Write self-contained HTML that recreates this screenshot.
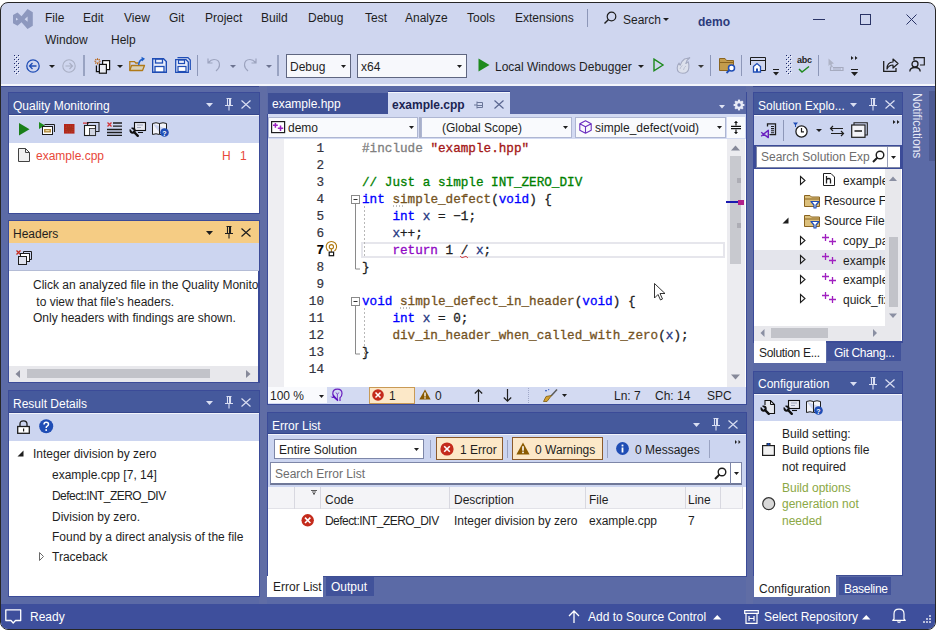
<!DOCTYPE html>
<html><head><meta charset="utf-8">
<style>
*{margin:0;padding:0;box-sizing:border-box}
html,body{width:936px;height:632px;overflow:hidden;background:#fff;font-family:"Liberation Sans",sans-serif;font-size:12px;color:#1e1e1e}
.a{position:absolute}
.t{position:absolute;white-space:nowrap;line-height:14px}
#win{position:absolute;left:0;top:2px;width:936px;height:628px;border:1px solid #262626;border-radius:8px;background:#CFD6EF;overflow:hidden}
#in{position:absolute;left:-1px;top:-3px;width:936px;height:632px}
.env{background:#5B6AA6}
.ttl{background:#45599C;color:#fff}
.ttlA{background:#F5CC84;color:#1e1e1e}
.tb{background:#CCD5F0}
.wh{background:#fff}
svg{position:absolute;overflow:visible}
.mono{font-family:"Liberation Mono",monospace}
</style></head><body>
<div id="win"><div id="in">

  <!-- MENU BAR -->
  <svg style="left:0;top:0" width="40" height="35" viewBox="0 0 40 35">
    <path d="M13 15 L17.5 12.5 L21.5 16.2 L27.5 9 L32.8 12.3 V25.7 L27.5 29 L21.5 22.2 L17.5 25.8 L13 23.2 Z M16 17.8 V20.6 L18.3 19.2Z M27.6 16.6 V21.8 L24.6 19.2 Z" fill="#8D98BE" fill-rule="evenodd"/>
  </svg>
  <div class="t" style="left:45px;top:11px">File</div>
  <div class="t" style="left:83px;top:11px">Edit</div>
  <div class="t" style="left:124px;top:11px">View</div>
  <div class="t" style="left:169px;top:11px">Git</div>
  <div class="t" style="left:205px;top:11px">Project</div>
  <div class="t" style="left:261px;top:11px">Build</div>
  <div class="t" style="left:308px;top:11px">Debug</div>
  <div class="t" style="left:365px;top:11px">Test</div>
  <div class="t" style="left:405px;top:11px">Analyze</div>
  <div class="t" style="left:467px;top:11px">Tools</div>
  <div class="t" style="left:515px;top:11px">Extensions</div>
  <div class="t" style="left:45px;top:33px">Window</div>
  <div class="t" style="left:111px;top:33px">Help</div>
  <div class="a" style="left:587px;top:9px;width:1px;height:18px;background:#8D97B8"></div>
  <svg style="left:603px;top:11px" width="14" height="14" viewBox="0 0 14 14"><circle cx="8.5" cy="5.5" r="4.3" fill="none" stroke="#1e1e1e" stroke-width="1.2"/><path d="M5.5 8.5 L1.5 12.5" stroke="#1e1e1e" stroke-width="1.4"/></svg>
  <div class="t" style="left:623px;top:13px">Search</div>
  <svg style="left:663px;top:18px" width="6" height="4"><path d="M0 0H6L3 3Z" fill="#1e1e1e"/></svg>
  <div class="t" style="left:698px;top:15px;font-weight:bold;color:#2B3A7B">demo</div>
  <div class="a" style="left:813px;top:19px;width:12px;height:1px;background:#2a3466"></div>
  <div class="a" style="left:860px;top:14px;width:11px;height:11px;border:1px solid #2a3466"></div>
  <svg style="left:906px;top:14px" width="11" height="11" viewBox="0 0 11 11"><path d="M0.5 0.5L10.5 10.5M10.5 0.5L0.5 10.5" stroke="#2a3466" stroke-width="1"/></svg>

  <!-- TOOLBAR -->
  <svg style="left:14px;top:55px" width="6" height="20" viewBox="0 0 6 20"><g fill="#F4F6FC"><rect x="1" y="1" width="1" height="1"/><rect x="5" y="1" width="1" height="1"/><rect x="3" y="3" width="1" height="1"/><rect x="1" y="5" width="1" height="1"/><rect x="5" y="5" width="1" height="1"/><rect x="3" y="7" width="1" height="1"/><rect x="1" y="9" width="1" height="1"/><rect x="5" y="9" width="1" height="1"/><rect x="3" y="11" width="1" height="1"/><rect x="1" y="13" width="1" height="1"/><rect x="5" y="13" width="1" height="1"/><rect x="3" y="15" width="1" height="1"/><rect x="1" y="17" width="1" height="1"/><rect x="5" y="17" width="1" height="1"/><rect x="3" y="19" width="1" height="1"/></g><g fill="#1E2A6A"><rect x="0" y="0" width="1" height="1"/><rect x="4" y="0" width="1" height="1"/><rect x="2" y="2" width="1" height="1"/><rect x="0" y="4" width="1" height="1"/><rect x="4" y="4" width="1" height="1"/><rect x="2" y="6" width="1" height="1"/><rect x="0" y="8" width="1" height="1"/><rect x="4" y="8" width="1" height="1"/><rect x="2" y="10" width="1" height="1"/><rect x="0" y="12" width="1" height="1"/><rect x="4" y="12" width="1" height="1"/><rect x="2" y="14" width="1" height="1"/><rect x="0" y="16" width="1" height="1"/><rect x="4" y="16" width="1" height="1"/><rect x="2" y="18" width="1" height="1"/></g></svg>
  <svg style="left:26px;top:59px" width="14" height="14" viewBox="0 0 14 14"><circle cx="7" cy="7" r="6.2" fill="none" stroke="#1F4DB5" stroke-width="1.3"/><path d="M10.5 7H3.5M6.5 4L3.5 7L6.5 10" fill="none" stroke="#1F4DB5" stroke-width="1.3"/></svg>
  <svg style="left:49px;top:65px" width="6" height="4"><path d="M0 0H6L3 3Z" fill="#1e1e1e"/></svg>
  <svg style="left:62px;top:59px" width="14" height="14" viewBox="0 0 14 14"><circle cx="7" cy="7" r="6.2" fill="none" stroke="#A9AFC4" stroke-width="1.1"/><path d="M3.5 7H10.5M7.5 4L10.5 7L7.5 10" fill="none" stroke="#A9AFC4" stroke-width="1.1"/></svg>
  <div class="a" style="left:83px;top:55px;width:2px;height:21px;background:#99A3C2"></div>
  <svg style="left:94px;top:56px" width="17" height="18" viewBox="0 0 17 18">
    <g stroke="#B8661A" stroke-width="1.1"><path d="M3.5 2.2V4M3.5 6.6V8.4M0.4 5.3H2.2M4.8 5.3H6.6M1.3 3.1L2.4 4.2M4.6 6.4L5.7 7.5M5.7 3.1L4.6 4.2M2.4 6.4L1.3 7.5"/></g>
    <rect x="8.6" y="4.6" width="7" height="9" fill="#fff" stroke="#111" stroke-width="1.2"/>
    <rect x="5.4" y="8.4" width="7" height="8.8" fill="#E9EBF2" stroke="#111" stroke-width="1.2"/>
    <path d="M2.4 9.6V15.6H5" fill="none" stroke="#111" stroke-width="1.2"/>
  </svg>
  <svg style="left:117px;top:65px" width="6" height="4"><path d="M0 0H6L3 3Z" fill="#1e1e1e"/></svg>
  <svg style="left:129px;top:56px" width="17" height="16" viewBox="0 0 17 16">
    <path d="M0.8 14.5V5.6H5.5L6.8 7H9.5" fill="none" stroke="#B07A18" stroke-width="1.3"/>
    <path d="M2.5 9.5H15.5L13.5 14.5H0.8Z" fill="#D8D0B8" stroke="#B07A18" stroke-width="1.3" stroke-linejoin="round"/>
    <path d="M9.8 9 V7.5 Q10.5 4 14 3" fill="none" stroke="#1F5FC8" stroke-width="1.4"/>
    <path d="M12.5 0.8L16 2.8L13 5.5Z" fill="#1F5FC8"/>
  </svg>
  <svg style="left:152px;top:58px" width="15" height="15" viewBox="0 0 15 15">
    <path d="M0.7 0.7H11.5L14.3 3.5V14.3H0.7Z" fill="#E8EDFA" stroke="#1F4DB5" stroke-width="1.4"/>
    <rect x="3.5" y="1" width="7" height="4" fill="none" stroke="#1F4DB5" stroke-width="1.3"/>
    <rect x="3" y="8.5" width="9" height="5.5" fill="#fff" stroke="#1F4DB5" stroke-width="1.3"/>
  </svg>
  <svg style="left:175px;top:57px" width="16" height="16" viewBox="0 0 16 16">
    <path d="M2.5 0.7H13L15.3 3V13" fill="none" stroke="#1F4DB5" stroke-width="1.2"/>
    <path d="M0.7 2.7H11L13.3 5V15.3H0.7Z" fill="#E8EDFA" stroke="#1F4DB5" stroke-width="1.3"/>
    <rect x="3.5" y="3" width="6" height="3.5" fill="none" stroke="#1F4DB5" stroke-width="1.2"/>
    <rect x="3" y="9.5" width="8" height="5" fill="#fff" stroke="#1F4DB5" stroke-width="1.2"/>
  </svg>
  <div class="a" style="left:197px;top:55px;width:1px;height:21px;background:#8D97B8"></div>
  <svg style="left:207px;top:57px" width="14" height="15" viewBox="0 0 14 15"><path d="M1 1.5V6H5.5 M1.5 5.5 Q4 2.5 7 2.5 Q12.5 2.5 12.5 8 Q12.5 11 9 14" fill="none" stroke="#9CA3BE" stroke-width="1.2"/></svg>
  <svg style="left:230px;top:65px" width="6" height="4"><path d="M0 0H6L3 3Z" fill="#6c7390"/></svg>
  <svg style="left:243px;top:57px" width="14" height="15" viewBox="0 0 14 15"><path d="M13 1.5V6H8.5 M12.5 5.5 Q10 2.5 7 2.5 Q1.5 2.5 1.5 8 Q1.5 11 5 14" fill="none" stroke="#9CA3BE" stroke-width="1.2"/></svg>
  <svg style="left:266px;top:65px" width="6" height="4"><path d="M0 0H6L3 3Z" fill="#6c7390"/></svg>
  <div class="a" style="left:277px;top:55px;width:2px;height:21px;background:#99A3C2"></div>
  <div class="a" style="left:286px;top:54px;width:65px;height:24px;border:1px solid #5F6680;background:#F7F8FC"></div>
  <div class="t" style="left:290px;top:60px">Debug</div>
  <svg style="left:341px;top:65px" width="6" height="4"><path d="M0 0H5L2.5 3Z" fill="#1e1e1e"/></svg>
  <div class="a" style="left:357px;top:54px;width:110px;height:24px;border:1px solid #5F6680;background:#F7F8FC"></div>
  <div class="t" style="left:361px;top:60px">x64</div>
  <svg style="left:457px;top:65px" width="6" height="4"><path d="M0 0H5L2.5 3Z" fill="#1e1e1e"/></svg>
  <svg style="left:478px;top:58px" width="12" height="14" viewBox="0 0 12 14"><path d="M0.5 0.5L11.5 7L0.5 13.5Z" fill="#1E8A1E"/></svg>
  <div class="t" style="left:495px;top:60px">Local Windows Debugger</div>
  <svg style="left:638px;top:65px" width="6" height="4"><path d="M0 0H6L3 3Z" fill="#1e1e1e"/></svg>
  <svg style="left:653px;top:58px" width="11" height="14" viewBox="0 0 11 14"><path d="M1 1.2L10 7L1 12.8Z" fill="none" stroke="#1E8A1E" stroke-width="1.4"/></svg>
  <svg style="left:676px;top:57px" width="16" height="18" viewBox="0 0 16 18"><path d="M6.8 16.3 Q1.2 16.3 1.2 11 Q1.2 8 3 6 L4.2 8.2 Q5 4.5 8.5 2 L13.8 0.8 Q10.5 3 9.8 6.5 L12.3 4.8 Q13.2 8 12.8 11 Q12.3 16.3 6.8 16.3Z" fill="#DCE0EC" stroke="#A4AAC2" stroke-width="1.1" stroke-linejoin="round"/><path d="M4 12 Q4.5 9.5 6.5 8.5 M7.5 13 Q8 10 10 9" fill="none" stroke="#B8BDD0" stroke-width="0.9"/></svg>
  <svg style="left:698px;top:65px" width="6" height="4"><path d="M0 0H6L3 3Z" fill="#3a3a3a"/></svg>
  <div class="a" style="left:710px;top:55px;width:1px;height:21px;background:#8D97B8"></div>
  <svg style="left:719px;top:58px" width="18" height="16" viewBox="0 0 18 16">
    <path d="M0.5 0.5H6L7.5 2.5H14.5V12.5H0.5Z" fill="#C49C4C" stroke="#8A6420"/>
    <path d="M0.5 4.5H14.5" stroke="#8A6420"/>
    <circle cx="12.5" cy="10" r="3" fill="#fff" stroke="#1F4DB5" stroke-width="1.5"/>
    <path d="M10.5 12L7.5 15" stroke="#1F4DB5" stroke-width="1.8"/>
  </svg>
  <div class="a" style="left:741px;top:55px;width:1px;height:21px;background:#8D97B8"></div>
  <svg style="left:750px;top:57px" width="16" height="16" viewBox="0 0 16 16">
    <path d="M0.5 0.5H15.5V13.5H10 M0.5 0.5V8" fill="none" stroke="#1e1e1e"/>
    <path d="M1 3.5H15" stroke="#1e1e1e" stroke-width="1.2"/>
    <path d="M3.5 9.5L7 6.5L10.5 9.5V15H3.5Z" fill="#fff" stroke="#1F4DB5" stroke-width="1.3"/>
    <rect x="6" y="11.5" width="2" height="3.5" fill="#1F4DB5"/>
  </svg>
  <svg style="left:773px;top:69px" width="7" height="8" viewBox="0 0 7 8"><path d="M0 0.5H6" stroke="#1e1e1e"/><path d="M0 3H6L3 6.5Z" fill="#1e1e1e"/></svg>
  <svg style="left:786px;top:55px" width="6" height="20" viewBox="0 0 6 20"><g fill="#F4F6FC"><rect x="1" y="1" width="1" height="1"/><rect x="5" y="1" width="1" height="1"/><rect x="3" y="3" width="1" height="1"/><rect x="1" y="5" width="1" height="1"/><rect x="5" y="5" width="1" height="1"/><rect x="3" y="7" width="1" height="1"/><rect x="1" y="9" width="1" height="1"/><rect x="5" y="9" width="1" height="1"/><rect x="3" y="11" width="1" height="1"/><rect x="1" y="13" width="1" height="1"/><rect x="5" y="13" width="1" height="1"/><rect x="3" y="15" width="1" height="1"/><rect x="1" y="17" width="1" height="1"/><rect x="5" y="17" width="1" height="1"/><rect x="3" y="19" width="1" height="1"/></g><g fill="#1E2A6A"><rect x="0" y="0" width="1" height="1"/><rect x="4" y="0" width="1" height="1"/><rect x="2" y="2" width="1" height="1"/><rect x="0" y="4" width="1" height="1"/><rect x="4" y="4" width="1" height="1"/><rect x="2" y="6" width="1" height="1"/><rect x="0" y="8" width="1" height="1"/><rect x="4" y="8" width="1" height="1"/><rect x="2" y="10" width="1" height="1"/><rect x="0" y="12" width="1" height="1"/><rect x="4" y="12" width="1" height="1"/><rect x="2" y="14" width="1" height="1"/><rect x="0" y="16" width="1" height="1"/><rect x="4" y="16" width="1" height="1"/><rect x="2" y="18" width="1" height="1"/></g></svg>
  <div class="a" style="left:797px;top:55px;font:bold 9px 'Liberation Sans',sans-serif;line-height:10px;color:#1e1e1e;letter-spacing:-0.2px">abc</div>
  <svg style="left:798px;top:66px" width="12" height="7" viewBox="0 0 12 7"><path d="M1 3L4 6L11 0.5" fill="none" stroke="#1E8A1E" stroke-width="1.5"/></svg>
  <div class="a" style="left:818px;top:55px;width:1px;height:21px;background:#8D97B8"></div>
  <svg style="left:828px;top:58px" width="16" height="15" viewBox="0 0 16 15">
    <path d="M0.5 0.5L6 5.5L3.5 6L5 9L3.5 9.5L2 6.5L0.5 8Z" fill="#AEB3C6"/>
    <path d="M2.5 8.5V12.5H15V9.5H5" fill="none" stroke="#A6ABBF" stroke-width="1.2"/>
    <path d="M5 11H13" stroke="#A6ABBF"/>
  </svg>
  <svg style="left:851px;top:56px" width="7" height="4" viewBox="0 0 7 4"><path d="M0 0L2.5 2L0 4ZM4 0L6.5 2L4 4Z" fill="#1e1e1e"/></svg>
  <svg style="left:851px;top:69px" width="7" height="8" viewBox="0 0 7 8"><path d="M0 0.5H7" stroke="#1e1e1e"/><path d="M0 3H7L3.5 7Z" fill="#1e1e1e"/></svg>
  <svg style="left:883px;top:57px" width="16" height="15" viewBox="0 0 16 15">
    <path d="M0.7 4V14.3H13V11" fill="none" stroke="#1e1e1e" stroke-width="1.3"/>
    <path d="M4 12 Q4 5 10 5V2L15 6.5L10 11V8 Q6 8 4 12Z" fill="none" stroke="#1e1e1e" stroke-width="1.2" stroke-linejoin="round"/>
  </svg>
  <svg style="left:909px;top:57px" width="16" height="15" viewBox="0 0 16 15">
    <path d="M5 3V0.7H15.3V8H11" fill="none" stroke="#1e1e1e" stroke-width="1.2"/>
    <circle cx="6" cy="7" r="3" fill="none" stroke="#1e1e1e" stroke-width="1.3"/>
    <path d="M0.8 14.5 Q1 10.5 6 10.5 Q11 10.5 11.2 14.5" fill="none" stroke="#1e1e1e" stroke-width="1.3"/>
  </svg>
  <!-- env background -->
  <div class="a env" style="left:0;top:86px;width:936px;height:518px"></div>
  <div class="a" style="left:0;top:84px;width:936px;height:2px;background:#F4F6FC"></div>
  <div class="a" style="left:0;top:86px;width:936px;height:1px;background:#3A4890"></div>

  <!-- panel borders -->
  <div class="a" style="left:259px;top:86px;width:8px;height:518px;background:#606DA5"></div>
  <div class="a" style="left:746px;top:86px;width:7px;height:518px;background:#606DA5"></div>
  <div class="a" style="left:8px;top:92px;width:252px;height:122px;background:#3B4B98"></div>
  <div class="a" style="left:8px;top:220px;width:252px;height:163px;background:#3B4B98"></div>
  <div class="a" style="left:8px;top:390px;width:252px;height:207px;background:#3B4B98"></div>
  <div class="a" style="left:267px;top:92px;width:480px;height:313px;background:#3B4B98"></div>
  <div class="a" style="left:267px;top:412px;width:480px;height:165px;background:#3B4B98"></div>
  <div class="a" style="left:753px;top:92px;width:150px;height:251px;background:#3B4B98"></div>
  <div class="a" style="left:753px;top:371px;width:150px;height:205px;background:#3B4B98"></div>
  <!-- status bar -->
  <div class="a" style="left:0;top:604px;width:936px;height:28px;background:#3E4F9C"></div>


  <!-- LEFT PANELS -->
  <!-- Quality Monitoring -->
  <div class="a ttl" style="left:9px;top:93px;width:250px;height:22px;border-bottom:1px solid #34468C"></div>
  <div class="t" style="left:13px;top:99px;color:#fff">Quality Monitoring</div>
  <svg style="left:206px;top:103px" width="8" height="5"><path d="M0 0H7L3.5 4Z" fill="#D9DEF2"/></svg>
  <svg style="left:225px;top:98px" width="8" height="13" viewBox="0 0 8 13"><path d="M1.5 0.5H6.5 M2.5 0.5V7.5 M5.5 0.5V7.5 M0 7.5H8 M4 7.5V12.5" fill="none" stroke="#D9DEF2" stroke-width="1.1"/><rect x="4" y="1" width="1.5" height="6" fill="#D9DEF2"/></svg>
  <svg style="left:241px;top:100px" width="10" height="9" viewBox="0 0 10 9"><path d="M0.5 0.5L9.5 8.5M9.5 0.5L0.5 8.5" stroke="#D9DEF2" stroke-width="1.2"/></svg>
  <div class="a tb" style="left:9px;top:115px;width:250px;height:28px;border-top:1px solid #F2F4FB"></div>
  <svg style="left:19px;top:123px" width="11" height="13" viewBox="0 0 11 13"><path d="M0 0L10.5 6.3L0 12.6Z" fill="#1A7F1A"/></svg>
  <svg style="left:39px;top:122px" width="17" height="14" viewBox="0 0 17 14">
    <path d="M0 0L6 3.5L0 7Z" fill="#1E8A1E"/>
    <path d="M5.5 2.5H15.5V10" fill="none" stroke="#1e1e1e"/>
    <rect x="3.5" y="4.5" width="10" height="8" fill="#fff" stroke="#1e1e1e"/>
    <rect x="5" y="7" width="7" height="3.5" fill="#B08A3E"/>
    <rect x="6.5" y="8" width="4" height="1.2" fill="#E8D8A8"/>
  </svg>
  <svg style="left:64px;top:124px" width="11" height="10" viewBox="0 0 11 10"><rect x="0" y="0" width="10.5" height="9.6" fill="#B3261A"/><path d="M2 2H9V8H2Z" fill="#A8301C" stroke="#C84838" stroke-width="0.5" stroke-dasharray="1 1"/></svg>
  <svg style="left:83px;top:122px" width="17" height="14" viewBox="0 0 17 14">
    <path d="M0 1.2H6" stroke="#D13438" stroke-width="1.3"/>
    <path d="M4.5 3.5V0.5H16V9.5H13" fill="none" stroke="#1e1e1e" stroke-width="1.1"/>
    <rect x="1.5" y="3.5" width="11" height="10" fill="#fff" stroke="#1e1e1e" stroke-width="1.1"/>
    <rect x="6.5" y="6.5" width="6" height="7" fill="#D0D4E0" stroke="#1e1e1e" stroke-width="0.8"/>
  </svg>
  <svg style="left:107px;top:122px" width="15" height="14" viewBox="0 0 15 14">
    <path d="M0.5 0.5L4.5 4.5M4.5 0.5L0.5 4.5" stroke="#D13438" stroke-width="1.3"/>
    <path d="M6 1H15M6 4.2H15M0 7.5H15M0 10.5H15M0 13.4H15" stroke="#1e1e1e" stroke-width="1.3"/>
  </svg>
  <svg style="left:129px;top:121px" width="17" height="17" viewBox="0 0 17 17">
    <rect x="5.5" y="1.5" width="11" height="8" fill="#E6E8F0" stroke="#111" stroke-width="1.1"/><path d="M8 4H14M8 6.5H12" stroke="#9AA0B5" stroke-width="0.9"/><path d="M9 11.5H14" stroke="#111" stroke-width="1.1"/><circle cx="3.6" cy="9.6" r="2.1" fill="none" stroke="#111" stroke-width="2"/><path d="M5 11L8.8 14.8" stroke="#111" stroke-width="2.4" stroke-linecap="round"/><path d="M1 7L3.3 9.3" stroke="#CCD5F0" stroke-width="1.4"/>
  </svg>
  <svg style="left:152px;top:122px" width="17" height="15" viewBox="0 0 17 15">
    <path d="M0.5 1.5Q4 0 7.5 1.5Q11 0 14.5 1.5V7 M7.5 1.5V12 M0.5 1.5V12.5Q4 11 7.5 12.5H9" fill="#F2F3F8" stroke="#1e1e1e"/>
    <circle cx="12.5" cy="10.5" r="4.3" fill="#1F4DB5"/>
    <text x="12.5" y="13.5" font-size="7" font-weight="bold" fill="#fff" text-anchor="middle" font-family="Liberation Sans">?</text>
  </svg>
  <div class="a wh" style="left:9px;top:143px;width:250px;height:70px"></div>
  <svg style="left:18px;top:148px" width="12" height="14" viewBox="0 0 12 14"><path d="M0.5 0.5H7.5L11.5 4.5V13.5H0.5Z" fill="#F0F0F0" stroke="#424242"/><path d="M7.5 0.5V4.5H11.5" fill="none" stroke="#424242"/></svg>
  <div class="t" style="left:36px;top:149px;color:#E8483A">example.cpp</div>
  <div class="t" style="left:222px;top:149px;color:#E8483A">H</div>
  <div class="t" style="left:240px;top:149px;color:#E8483A">1</div>
  <!-- Headers -->
  <div class="a ttlA" style="left:9px;top:221px;width:250px;height:22px"></div>
  <div class="t" style="left:13px;top:227px">Headers</div>
  <svg style="left:206px;top:231px" width="8" height="5"><path d="M0 0H7L3.5 4Z" fill="#1e1e1e"/></svg>
  <svg style="left:225px;top:226px" width="8" height="13" viewBox="0 0 8 13"><path d="M1.5 0.5H6.5 M2.5 0.5V7.5 M5.5 0.5V7.5 M0 7.5H8 M4 7.5V12.5" fill="none" stroke="#1e1e1e" stroke-width="1.1"/><rect x="4" y="1" width="1.5" height="6" fill="#1e1e1e"/></svg>
  <svg style="left:241px;top:228px" width="10" height="9" viewBox="0 0 10 9"><path d="M0.5 0.5L9.5 8.5M9.5 0.5L0.5 8.5" stroke="#1e1e1e" stroke-width="1.2"/></svg>
  <div class="a tb" style="left:9px;top:243px;width:250px;height:28px;border-bottom:1px solid #B4BCD6"></div>
  <svg style="left:16px;top:250px" width="17" height="15" viewBox="0 0 17 15">
    <path d="M0.5 0.5L4.5 4.5M4.5 0.5L0.5 4.5" stroke="#C42B1C" stroke-width="1.3"/>
    <path d="M7.5 3.5V1.5H15.5V9.5H13" fill="none" stroke="#1e1e1e"/>
    <rect x="4.5" y="3.5" width="9" height="8" fill="#fff" stroke="#1e1e1e"/>
    <rect x="2.5" y="6.5" width="8" height="8" fill="#E0E3EE" stroke="#1e1e1e"/>
  </svg>
  <div class="a wh" style="left:9px;top:271px;width:249px;height:111px"></div>
  <div class="a" style="left:9px;top:271px;width:249px;height:95px;overflow:hidden">
    <div class="t" style="left:24px;top:7px">Click an analyzed file in the Quality Monitor</div>
    <div class="t" style="left:24px;top:24px">&nbsp;to view that file's headers.</div>
    <div class="t" style="left:24px;top:40px">Only headers with findings are shown.</div>
  </div>
  <div class="a" style="left:9px;top:366px;width:249px;height:16px;background:#E8E8EC"></div>
  <svg style="left:15px;top:370px" width="6" height="9"><path d="M5 0V8L0.5 4Z" fill="#868999"/></svg>
  <div class="a" style="left:27px;top:369px;width:183px;height:9px;background:#C2C3C9"></div>
  <svg style="left:246px;top:370px" width="6" height="9"><path d="M0 0V8L4.5 4Z" fill="#868999"/></svg>
  <!-- Result Details -->
  <div class="a ttl" style="left:9px;top:391px;width:250px;height:22px;border-bottom:1px solid #34468C"></div>
  <div class="t" style="left:13px;top:397px;color:#fff">Result Details</div>
  <svg style="left:206px;top:401px" width="8" height="5"><path d="M0 0H7L3.5 4Z" fill="#D9DEF2"/></svg>
  <svg style="left:225px;top:396px" width="8" height="13" viewBox="0 0 8 13"><path d="M1.5 0.5H6.5 M2.5 0.5V7.5 M5.5 0.5V7.5 M0 7.5H8 M4 7.5V12.5" fill="none" stroke="#D9DEF2" stroke-width="1.1"/><rect x="4" y="1" width="1.5" height="6" fill="#D9DEF2"/></svg>
  <svg style="left:241px;top:398px" width="10" height="9" viewBox="0 0 10 9"><path d="M0.5 0.5L9.5 8.5M9.5 0.5L0.5 8.5" stroke="#D9DEF2" stroke-width="1.2"/></svg>
  <div class="a tb" style="left:9px;top:413px;width:250px;height:28px;border-top:1px solid #F2F4FB"></div>
  <svg style="left:17px;top:420px" width="13" height="14" viewBox="0 0 13 14"><path d="M3 6.5V4Q3 0.8 6.5 0.8Q10 0.8 10 4V6.5" fill="none" stroke="#1e1e1e" stroke-width="1.3"/><rect x="0.7" y="6.5" width="11.6" height="6.8" fill="#fff" stroke="#1e1e1e" stroke-width="1.3"/><rect x="6" y="8.5" width="1.2" height="3" fill="#1e1e1e"/></svg>
  <svg style="left:39px;top:419px" width="15" height="15" viewBox="0 0 15 15"><circle cx="7.2" cy="7.2" r="7" fill="#1F4DB5"/><path d="M5 5.5Q5 3.3 7.2 3.3Q9.5 3.3 9.5 5.3Q9.5 6.6 7.9 7.4Q7.2 7.8 7.2 9" fill="none" stroke="#fff" stroke-width="1.5"/><rect x="6.4" y="10.2" width="1.6" height="1.7" fill="#fff"/></svg>
  <div class="a wh" style="left:9px;top:441px;width:250px;height:155px"></div>
  <svg style="left:17px;top:450px" width="7" height="7"><path d="M6.5 0.5V6.5H0.5Z" fill="#1e1e1e"/></svg>
  <div class="t" style="left:33px;top:447px">Integer division by zero</div>
  <div class="t" style="left:52px;top:468px">example.cpp [7, 14]</div>
  <div class="t" style="left:52px;top:489px;letter-spacing:-0.55px">Defect:INT_ZERO_DIV</div>
  <div class="t" style="left:52px;top:510px">Division by zero.</div>
  <div class="t" style="left:52px;top:530px">Found by a direct analysis of the file</div>
  <svg style="left:39px;top:552px" width="5" height="9"><path d="M0.5 0.5L4.5 4.5L0.5 8.5Z" fill="none" stroke="#6a6a6a"/></svg>
  <div class="t" style="left:52px;top:550px">Traceback</div>

  <!-- EDITOR -->
  <div class="a" style="left:267px;top:86px;width:479px;height:28px;background:#5B6AA6"></div>
  <div class="a" style="left:268px;top:93px;width:120px;height:21px;background:#3F5096"></div>
  <div class="t" style="left:272px;top:97px;color:#fff">example.hpp</div>
  <div class="a" style="left:388px;top:91px;width:122px;height:24px;background:#D3DAF2;border-top:1px solid #34438E;box-shadow:inset 0 1px 0 #F4F6FC"></div>
  <div class="t" style="left:392px;top:98px;font-weight:bold;color:#1B2452">example.cpp</div>
  <svg style="left:474px;top:101px" width="10" height="8" viewBox="0 0 10 8"><path d="M0 4H3 M3 0.5V7.5 M3 1.5H8.5V6.5H3 M3 4.5H8.5" fill="none" stroke="#6B7699" stroke-width="1"/></svg>
  <svg style="left:494px;top:100px" width="10" height="9" viewBox="0 0 10 9"><path d="M0.5 0.5L9.5 8.5M9.5 0.5L0.5 8.5" stroke="#5A6690" stroke-width="1.2"/></svg>
  <svg style="left:719px;top:105px" width="6" height="4"><path d="M0 0H6L3 3.5Z" fill="#E0E4F4"/></svg>
  <svg style="left:733px;top:99px" width="12" height="12" viewBox="0 0 12 12"><g fill="#E8EBF7"><circle cx="6" cy="6" r="4"/><rect x="4.9" y="0.6" width="2.2" height="10.8"/><rect x="0.6" y="4.9" width="10.8" height="2.2"/><rect x="4.9" y="0.6" width="2.2" height="10.8" transform="rotate(45 6 6)"/><rect x="4.9" y="0.6" width="2.2" height="10.8" transform="rotate(-45 6 6)"/></g><circle cx="6" cy="6" r="1.7" fill="#5B6AA6"/></svg>
  <div class="a tb" style="left:268px;top:114px;width:478px;height:25px;background:#D3DAF2"></div>
  <div class="a" style="left:268px;top:117px;width:150px;height:21px;border:1px solid #AEB6D2;background:#F9FAFD"></div>
  <svg style="left:271px;top:120px" width="15" height="14" viewBox="0 0 15 14"><rect x="0.6" y="1.6" width="13" height="11" fill="#fff" stroke="#1e1e1e" stroke-width="1.2"/><path d="M4.4 2.9V7.7M2 5.3H6.8M9.5 5.5V10.9M6.8 8.2H12.2" stroke="#9B1FBF" stroke-width="1.5"/></svg>
  <div class="t" style="left:288px;top:121px">demo</div>
  <svg style="left:409px;top:126px" width="6" height="4"><path d="M0 0H5L2.5 3Z" fill="#1e1e1e"/></svg>
  <div class="a" style="left:419px;top:117px;width:2px;height:21px;background:#A9B0C9"></div>
  <div class="a" style="left:421px;top:117px;width:151px;height:21px;border:1px solid #AEB6D2;background:#F9FAFD"></div>
  <div class="t" style="left:442px;top:121px">(Global Scope)</div>
  <svg style="left:563px;top:126px" width="6" height="4"><path d="M0 0H5L2.5 3Z" fill="#1e1e1e"/></svg>
  <div class="a" style="left:575px;top:117px;width:151px;height:21px;border:1px solid #AEB6D2;background:#F9FAFD"></div>
  <svg style="left:579px;top:120px" width="13" height="14" viewBox="0 0 13 14"><path d="M6.5 0.8L12.2 3.8V10.2L6.5 13.2L0.8 10.2V3.8Z M0.8 3.8L6.5 6.8L12.2 3.8 M6.5 6.8V13.2" fill="none" stroke="#6B2FBF" stroke-width="1.1" stroke-linejoin="round"/></svg>
  <div class="t" style="left:595px;top:121px">simple_defect(void)</div>
  <svg style="left:717px;top:126px" width="6" height="4"><path d="M0 0H5L2.5 3Z" fill="#1e1e1e"/></svg>
  <div class="a" style="left:727px;top:117px;width:18px;height:21px;background:#F9FAFD"></div>
  <svg style="left:730px;top:120px" width="12" height="15" viewBox="0 0 12 15"><path d="M1 6.3H11M1 8.6H11" stroke="#111" stroke-width="1.2"/><path d="M6 2V5.5M6 9.5V13" stroke="#111" stroke-width="1.2"/><path d="M4 3L6 0.8L8 3Z M4 12L6 14.2L8 12Z" fill="#111"/></svg>

  <!-- code area -->
  <div class="a wh" style="left:268px;top:139px;width:478px;height:248px"></div>
  <div class="a" style="left:268px;top:139px;width:16px;height:248px;background:#EEEEF2"></div>
  <div class="a" style="left:361px;top:242px;width:364px;height:16px;border:2px solid #E6E6EC"></div>
  <div class="a mono" id="gut" style="left:290px;top:140px;width:34px;font-size:12.67px;-webkit-text-stroke:0.2px currentColor;line-height:17px;text-align:right;color:#333340">
    <div>1</div><div>2</div><div>3</div><div>4</div><div>5</div><div>6</div><div style="font-weight:bold;color:#000">7</div><div>8</div><div>9</div><div>10</div><div>11</div><div>12</div><div>13</div><div>14</div>
  </div>
  <svg style="left:325px;top:240px" width="13" height="17" viewBox="0 0 13 17"><path d="M3.4 10.95 A5.2 5.2 0 1 1 9.4 10.95" fill="#fff" stroke="#B07A10" stroke-width="1.1"/><circle cx="6.4" cy="6.7" r="2.1" fill="none" stroke="#B07A10" stroke-width="1.1"/><path d="M6.4 8.8V12" stroke="#B07A10" stroke-width="1.1"/><rect x="4.2" y="12.1" width="4.4" height="3.6" fill="#fff" stroke="#111" stroke-width="1.2"/></svg>
  <!-- folding -->
  <svg style="left:350px;top:195px" width="12" height="170" viewBox="0 0 12 170">
    <rect x="1.5" y="0.5" width="8" height="8" fill="#fff" stroke="#8a8a8a"/><path d="M3.5 4.5H7.5" stroke="#333"/>
    <path d="M5.5 9V74H10" fill="none" stroke="#8a8a8a"/>
    <rect x="1.5" y="102.5" width="8" height="8" fill="#fff" stroke="#8a8a8a"/><path d="M3.5 106.5H7.5" stroke="#333"/>
    <path d="M5.5 111V159H10" fill="none" stroke="#8a8a8a"/>
  </svg>
  <svg style="left:364px;top:206px" width="2" height="160" viewBox="0 0 2 160"><path d="M0.5 0V52 M0.5 102V152" stroke="#B8B8B8" stroke-dasharray="2 2"/></svg>
  <div class="a mono" id="code" style="left:362px;top:140px;font-size:12.67px;-webkit-text-stroke:0.3px currentColor;line-height:17px;color:#1e1e1e;white-space:pre"><div><span style="color:#808080">#include</span> <span style="color:#A31515">"example.hpp"</span></div><div> </div><div><span style="color:#008000">// Just a simple INT_ZERO_DIV</span></div><div><span style="color:#0000FF">int</span> <span style="color:#74531F">simple_defect</span>(<span style="color:#0000FF">void</span>) {</div><div>    <span style="color:#0000FF">int</span> <span style="color:#1F377F">x</span> = &#8722;1;</div><div>    <span style="color:#1F377F">x</span>++;</div><div>    <span style="color:#8F08C4">return</span> 1 / <span style="color:#1F377F">x</span>;</div><div>}</div><div> </div><div><span style="color:#0000FF">void</span> <span style="color:#74531F">simple_defect_in_header</span>(<span style="color:#0000FF">void</span>) {</div><div>    <span style="color:#0000FF">int</span> <span style="color:#1F377F">x</span> = 0;</div><div>    <span style="color:#74531F">div_in_header_when_called_with_zero</span>(<span style="color:#1F377F">x</span>);</div><div>}</div>
  </div>
  <svg style="left:393px;top:205px" width="12" height="2"><path d="M0 1H12" stroke="#808080" stroke-dasharray="1 2"/></svg>
  <svg style="left:400px;top:307px" width="12" height="2"><path d="M0 1H12" stroke="#808080" stroke-dasharray="1 2"/></svg>
  <svg style="left:460px;top:255px" width="8" height="4" viewBox="0 0 8 4"><path d="M0 1Q2 4 4 2Q6 0 8 3" fill="none" stroke="#D13438" stroke-width="0.9"/></svg>
  <!-- cursor -->
  <svg style="left:654px;top:283px" width="12" height="18" viewBox="0 0 12 18"><path d="M0.5 0.5V15L4 11.5L6.5 17L8.5 16L6 10.5H11Z" fill="#fff" stroke="#1e1e1e" stroke-width="0.9"/></svg>
  <!-- vscroll -->
  <div class="a" style="left:727px;top:139px;width:18px;height:248px;background:#ECECF0"></div>
  <svg style="left:731px;top:145px" width="10" height="6"><path d="M0 5.5H9L4.5 0.5Z" fill="#868999"/></svg>
  <div class="a" style="left:730px;top:156px;width:11px;height:108px;background:#C8C9CF"></div>
  <div class="a" style="left:737px;top:178px;width:4px;height:5px;background:#ADADB5"></div>
  <div class="a" style="left:737px;top:223px;width:4px;height:5px;background:#ADADB5"></div>
  <div class="a" style="left:726px;top:201px;width:18px;height:2px;background:#1A1AB0"></div>
  <div class="a" style="left:738px;top:200px;width:6px;height:5px;background:#B0208A"></div>
  <svg style="left:731px;top:374px" width="10" height="6"><path d="M0 0.5H9L4.5 5.5Z" fill="#868999"/></svg>

  <!-- editor status -->
  <div class="a tb" style="left:268px;top:387px;width:478px;height:17px;background:#D3DAF2"></div>
  <div class="a" style="left:268px;top:387px;width:59px;height:16px;background:#F9FAFD"></div>
  <div class="t" style="left:270px;top:389px">100 %</div>
  <svg style="left:319px;top:395px" width="6" height="4"><path d="M0 0H5L2.5 3Z" fill="#1e1e1e"/></svg>
  <svg style="left:330px;top:388px" width="14" height="15" viewBox="0 0 14 15"><path d="M4.5 9.5 Q2.8 8 2.8 5.5 Q2.8 1.2 7.4 1.2 Q12 1.2 12 5.5 Q12 8 10 9.8 V13" fill="none" stroke="#6A1FBF" stroke-width="1.2"/><path d="M6 4.5L7.4 6.5L8.8 4.5M7.4 6.5V12" fill="none" stroke="#6A1FBF" stroke-width="0.8"/><path d="M0.5 7.8 L1.8 9 L3 8.6 L3.2 7.4 L2.2 6.5 Q4 6.1 4.5 7.8 L8.2 11.8 Q8.6 12.8 7.6 13.2 L3.6 9.8 Q1 10.4 0.5 7.8Z" fill="#5A10C0"/></svg>
  <div class="a" style="left:369px;top:387px;width:46px;height:17px;background:#FCE8C8;border:1px solid #C99A55"></div>
  <svg style="left:372px;top:389px" width="12" height="12" viewBox="0 0 12 12"><circle cx="6" cy="6" r="5.8" fill="#C42B1C"/><path d="M3.5 3.5L8.5 8.5M8.5 3.5L3.5 8.5" stroke="#fff" stroke-width="1.5"/></svg>
  <div class="t" style="left:389px;top:389px">1</div>
  <svg style="left:419px;top:389px" width="12" height="11" viewBox="0 0 12 11"><path d="M6 0.5L11.7 10.5H0.3Z" fill="#8A5A00"/><rect x="5.3" y="3.5" width="1.4" height="4" fill="#fff"/><rect x="5.3" y="8.3" width="1.4" height="1.3" fill="#fff"/></svg>
  <div class="t" style="left:435px;top:389px">0</div>
  <svg style="left:474px;top:389px" width="9" height="13" viewBox="0 0 9 13"><path d="M4.5 1V13M0.8 4.5L4.5 0.8L8.2 4.5" fill="none" stroke="#1e1e1e" stroke-width="1.2"/></svg>
  <svg style="left:503px;top:389px" width="9" height="13" viewBox="0 0 9 13"><path d="M4.5 0V12M0.8 8.5L4.5 12.2L8.2 8.5" fill="none" stroke="#1e1e1e" stroke-width="1.2"/></svg>
  <svg style="left:528px;top:388px" width="1" height="15"><path d="M0.5 0V15" stroke="#A0A8C8" stroke-dasharray="1 1"/></svg>
  <svg style="left:543px;top:389px" width="15" height="13" viewBox="0 0 15 13"><path d="M14 0.5L8 7" stroke="#5a5a5a" stroke-width="1.5"/><path d="M8.5 6.5L4 12.5H0.5L3 7.5Z" fill="#D4A030" stroke="#7A5A10" stroke-width="0.8"/><path d="M2 1L3 3L4 1ZM5 0L5.5 1.5L6.5 0.5Z" fill="#1F4DB5"/></svg>
  <svg style="left:562px;top:394px" width="6" height="4"><path d="M0 0H5L2.5 3Z" fill="#1e1e1e"/></svg>
  <div class="t" style="left:614px;top:389px">Ln: 7</div>
  <div class="t" style="left:655px;top:389px">Ch: 14</div>
  <div class="t" style="left:707px;top:389px">SPC</div>

  <!-- ERROR LIST -->
  <div class="a ttl" style="left:268px;top:413px;width:478px;height:21px;border-bottom:1px solid #34468C"></div>
  <div class="t" style="left:272px;top:419px;color:#fff">Error List</div>
  <svg style="left:693px;top:423px" width="8" height="5"><path d="M0 0H7L3.5 4Z" fill="#D9DEF2"/></svg>
  <svg style="left:712px;top:418px" width="8" height="13" viewBox="0 0 8 13"><path d="M1.5 0.5H6.5 M2.5 0.5V7.5 M5.5 0.5V7.5 M0 7.5H8 M4 7.5V12.5" fill="none" stroke="#D9DEF2" stroke-width="1.1"/><rect x="4" y="1" width="1.5" height="6" fill="#D9DEF2"/></svg>
  <svg style="left:728px;top:420px" width="10" height="9" viewBox="0 0 10 9"><path d="M0.5 0.5L9.5 8.5M9.5 0.5L0.5 8.5" stroke="#D9DEF2" stroke-width="1.2"/></svg>
  <div class="a tb" style="left:268px;top:434px;width:478px;height:54px;border-top:1px solid #F2F4FB"></div>
  <div class="a" style="left:274px;top:439px;width:150px;height:20px;border:1px solid #7D86A8;background:#fff"></div>
  <div class="t" style="left:279px;top:443px">Entire Solution</div>
  <svg style="left:414px;top:448px" width="6" height="4"><path d="M0 0H5L2.5 3Z" fill="#1e1e1e"/></svg>
  <div class="a" style="left:430px;top:440px;width:1px;height:18px;background:#9AA3C2"></div>
  <div class="a" style="left:436px;top:437px;width:67px;height:23px;border:1px solid #8B5A2B;background:#FCE8C8"></div>
  <svg style="left:440px;top:442px" width="14" height="14" viewBox="0 0 14 14"><circle cx="7" cy="7" r="6.6" fill="#C42B1C"/><path d="M4.2 4.2L9.8 9.8M9.8 4.2L4.2 9.8" stroke="#fff" stroke-width="1.6"/></svg>
  <div class="t" style="left:460px;top:443px">1 Error</div>
  <div class="a" style="left:507px;top:440px;width:1px;height:18px;background:#9AA3C2"></div>
  <div class="a" style="left:512px;top:437px;width:91px;height:23px;border:1px solid #8B5A2B;background:#FCE8C8"></div>
  <svg style="left:516px;top:442px" width="14" height="13" viewBox="0 0 14 13"><path d="M7 0.5L13.6 12.5H0.4Z" fill="#8A5A00"/><rect x="6.2" y="4.2" width="1.6" height="4.5" fill="#fff"/><rect x="6.2" y="9.6" width="1.6" height="1.6" fill="#fff"/></svg>
  <div class="t" style="left:535px;top:443px">0 Warnings</div>
  <div class="a" style="left:607px;top:440px;width:1px;height:18px;background:#9AA3C2"></div>
  <svg style="left:616px;top:442px" width="14" height="14" viewBox="0 0 14 14"><circle cx="6.5" cy="6.5" r="6.4" fill="#1F4DB5"/><rect x="5.6" y="5.5" width="1.8" height="5" fill="#fff"/><rect x="5.6" y="2.6" width="1.8" height="1.8" fill="#fff"/></svg>
  <div class="t" style="left:635px;top:443px">0 Messages</div>
  <div class="a" style="left:709px;top:440px;width:1px;height:18px;background:#9AA3C2"></div>
  <svg style="left:735px;top:440px" width="6" height="4" viewBox="0 0 6 4"><path d="M0 0L2 2L0 4ZM3.5 0L5.5 2L3.5 4Z" fill="#1e1e1e"/></svg>
  <div class="a" style="left:270px;top:462px;width:472px;height:23px;border:1px solid #7D86A8;border-bottom:2px solid #6F7898;background:#fff"></div>
  <div class="t" style="left:275px;top:467px;color:#6D6D6D">Search Error List</div>
  <svg style="left:714px;top:467px" width="13" height="13" viewBox="0 0 13 13"><circle cx="8" cy="5" r="3.8" fill="none" stroke="#1e1e1e" stroke-width="1.4"/><path d="M5.5 7.5L1 12" stroke="#1e1e1e" stroke-width="2"/></svg>
  <div class="a" style="left:730px;top:463px;width:1px;height:21px;background:#7D86A8"></div>
  <svg style="left:734px;top:472px" width="6" height="4"><path d="M0 0H5L2.5 3Z" fill="#1e1e1e"/></svg>
  <div class="a wh" style="left:268px;top:487px;width:478px;height:89px"></div>
  <div class="a" style="left:268px;top:487px;width:475px;height:22px;background:#F4F4F7;border-bottom:1px solid #E2E2E8"></div>
  <div class="a" style="left:294px;top:487px;width:1px;height:22px;background:#D8D8E0"></div>
  <div class="a" style="left:320px;top:487px;width:1px;height:22px;background:#D8D8E0"></div>
  <div class="a" style="left:449px;top:487px;width:1px;height:22px;background:#D8D8E0"></div>
  <div class="a" style="left:585px;top:487px;width:1px;height:22px;background:#D8D8E0"></div>
  <div class="a" style="left:685px;top:487px;width:1px;height:22px;background:#D8D8E0"></div>
  <div class="a" style="left:720px;top:487px;width:1px;height:22px;background:#D8D8E0"></div>
  <div class="a" style="left:742px;top:487px;width:1px;height:22px;background:#D8D8E0"></div>
  <svg style="left:311px;top:490px" width="6" height="5" viewBox="0 0 6 5"><path d="M0 0.5H6M1 2H5M2 3.5H4M3 3.5V5" stroke="#333" stroke-width="0.8"/></svg>
  <div class="t" style="left:325px;top:493px">Code</div>
  <div class="t" style="left:454px;top:493px">Description</div>
  <div class="t" style="left:589px;top:493px">File</div>
  <div class="t" style="left:688px;top:493px">Line</div>
  <svg style="left:301px;top:514px" width="14" height="13" viewBox="0 0 14 13"><circle cx="6.7" cy="6.3" r="6.2" fill="#C42B1C"/><path d="M4 3.6L9.4 9M9.4 3.6L4 9" stroke="#fff" stroke-width="1.6"/></svg>
  <div class="t" style="left:325px;top:514px;letter-spacing:-0.55px">Defect:INT_ZERO_DIV</div>
  <div class="t" style="left:454px;top:514px">Integer division by zero</div>
  <div class="t" style="left:589px;top:514px">example.cpp</div>
  <div class="t" style="left:688px;top:514px">7</div>
  <!-- bottom tabs -->
  <div class="a" style="left:323px;top:576px;width:423px;height:1px;background:#3E4E93"></div>
  <div class="a wh" style="left:267px;top:576px;width:56px;height:21px"></div>
  <div class="t" style="left:273px;top:580px">Error List</div>
  <div class="a" style="left:326px;top:577px;width:48px;height:19px;background:#41529A"></div>
  <div class="t" style="left:331px;top:580px;color:#fff">Output</div>

  <!-- SOLUTION EXPLORER -->
  <div class="a ttl" style="left:754px;top:93px;width:148px;height:22px;border-bottom:1px solid #34468C"></div>
  <div class="t" style="left:758px;top:99px;color:#fff">Solution Explo...</div>
  <svg style="left:850px;top:103px" width="8" height="5"><path d="M0 0H7L3.5 4Z" fill="#D9DEF2"/></svg>
  <svg style="left:869px;top:98px" width="8" height="13" viewBox="0 0 8 13"><path d="M1.5 0.5H6.5 M2.5 0.5V7.5 M5.5 0.5V7.5 M0 7.5H8 M4 7.5V12.5" fill="none" stroke="#D9DEF2" stroke-width="1.1"/><rect x="4" y="1" width="1.5" height="6" fill="#D9DEF2"/></svg>
  <svg style="left:885px;top:100px" width="10" height="9" viewBox="0 0 10 9"><path d="M0.5 0.5L9.5 8.5M9.5 0.5L0.5 8.5" stroke="#D9DEF2" stroke-width="1.2"/></svg>
  <div class="a tb" style="left:754px;top:115px;width:148px;height:30px;border-top:1px solid #F2F4FB"></div>
  <svg style="left:760px;top:122px" width="17" height="17" viewBox="0 0 17 17">
    <path d="M7.5 4.5V1.8H15.5V12.6H9.5" fill="none" stroke="#1e1e1e" stroke-width="1.3"/>
    <path d="M11 4.5H14M11 6.6H14M11 8.7H14M11 10.8H14" stroke="#1e1e1e" stroke-width="1.1"/>
    <path d="M1.2 10.2 L8.3 15.6 V8.2 L1.2 14.2" fill="none" stroke="#6A1FBF" stroke-width="1.4" stroke-linejoin="round"/>
  </svg>
  <div class="a" style="left:783px;top:120px;width:1px;height:21px;background:#8D97B8"></div>
  <svg style="left:793px;top:122px" width="15" height="16" viewBox="0 0 15 16">
    <path d="M0 0.5H5L3 3V5H2V3Z" fill="#1F4DB5"/>
    <circle cx="8.5" cy="9.5" r="5.6" fill="#fff" stroke="#1e1e1e" stroke-width="1.3"/>
    <path d="M8.5 6V9.8H11" fill="none" stroke="#1e1e1e" stroke-width="1.2"/>
  </svg>
  <svg style="left:816px;top:129px" width="6" height="4"><path d="M0 0H6L3 3Z" fill="#1e1e1e"/></svg>
  <svg style="left:830px;top:126px" width="14" height="10" viewBox="0 0 14 10"><path d="M0 2.5H13 M3 0L0.5 2.5L3 5 M1 7.5H14 M11 5L13.5 7.5L11 10" fill="none" stroke="#1e1e1e" stroke-width="1.2"/></svg>
  <svg style="left:851px;top:122px" width="17" height="16" viewBox="0 0 17 16">
    <path d="M3 3V0.7H16.3V13H14" fill="none" stroke="#1e1e1e" stroke-width="1.1"/>
    <rect x="0.7" y="3" width="13.3" height="12.3" fill="#F2F3F8" stroke="#1e1e1e" stroke-width="1.2"/>
    <path d="M3.5 9H11" stroke="#1e1e1e" stroke-width="1.3"/>
  </svg>
  <svg style="left:893px;top:120px" width="7" height="4" viewBox="0 0 7 4"><path d="M0 0L2.5 2L0 4ZM4 0L6.5 2L4 4Z" fill="#1e1e1e"/></svg>
  <div class="a" style="left:756px;top:146px;width:144px;height:22px;border:1px solid #7D86A8;background:#fff"></div>
  <div class="t" style="left:761px;top:150px;color:#6D6D6D">Search Solution Exp</div>
  <div class="a" style="left:887px;top:147px;width:13px;height:20px;background:#fff;border-left:1px solid #9AA0B8"></div>
  <svg style="left:872px;top:150px" width="13" height="13" viewBox="0 0 13 13"><circle cx="8" cy="5" r="3.8" fill="none" stroke="#1e1e1e" stroke-width="1.4"/><path d="M5.5 7.5L1 12" stroke="#1e1e1e" stroke-width="2"/></svg>
  <svg style="left:891px;top:156px" width="6" height="4"><path d="M0 0H5L2.5 3Z" fill="#1e1e1e"/></svg>
  <div class="a wh" style="left:754px;top:169px;width:148px;height:172px"></div>
  <div class="a" style="left:754px;top:250px;width:131px;height:20px;background:#E4E5EC"></div>
  <div class="a" style="left:754px;top:169px;width:131px;height:157px;overflow:hidden">
    <svg style="left:46px;top:7px" width="6" height="9" viewBox="0 0 6 9"><path d="M0.5 0.5L5 4.5L0.5 8.5Z" fill="none" stroke="#1e1e1e" stroke-width="1.1"/></svg>
    <svg style="left:69px;top:4px" width="12" height="13" viewBox="0 0 12 13"><path d="M0.5 0.5H8L11.5 4V12.5H0.5Z" fill="#fff" stroke="#1e1e1e"/><path d="M3.5 3V10.5M3.5 6.5Q4.5 5.5 6 5.5Q7.5 5.5 7.5 7V10.5" fill="none" stroke="#1e1e1e" stroke-width="1.3"/></svg>
    <div class="t" style="left:89px;top:5px">example.hpp</div>
    <svg style="left:50px;top:25px" width="16" height="15" viewBox="0 0 16 15"><path d="M0.5 1.5H6L7.5 3H15.5V12.5H0.5Z" fill="#DCC07C" stroke="#8A6420"/><path d="M0.5 5H15.5" stroke="#8A6420"/><path d="M7 7.5H15L12 11V14H10V11Z" fill="#fff" stroke="#1F4DB5" stroke-width="1.2" stroke-linejoin="round"/></svg>
    <div class="t" style="left:70px;top:25px">Resource Files</div>
    <svg style="left:28px;top:48px" width="7" height="7"><path d="M6.5 0.5V6.5H0.5Z" fill="#1e1e1e"/></svg>
    <svg style="left:50px;top:45px" width="16" height="15" viewBox="0 0 16 15"><path d="M0.5 1.5H6L7.5 3H15.5V12.5H0.5Z" fill="#DCC07C" stroke="#8A6420"/><path d="M0.5 5H15.5" stroke="#8A6420"/><path d="M7 7.5H15L12 11V14H10V11Z" fill="#fff" stroke="#1F4DB5" stroke-width="1.2" stroke-linejoin="round"/></svg>
    <div class="t" style="left:70px;top:45px">Source Files</div>
    <svg style="left:46px;top:67px" width="6" height="9" viewBox="0 0 6 9"><path d="M0.5 0.5L5 4.5L0.5 8.5Z" fill="none" stroke="#1e1e1e" stroke-width="1.1"/></svg>
    <svg style="left:68px;top:65px" width="14" height="11" viewBox="0 0 14 11"><path d="M3.5 0V7M0 3.5H7M10.5 4V11M7 7.5H14" stroke="#A020C0" stroke-width="1.3"/></svg>
    <div class="t" style="left:89px;top:65px">copy_paste.cpp</div>
    <svg style="left:46px;top:86px" width="6" height="9" viewBox="0 0 6 9"><path d="M0.5 0.5L5 4.5L0.5 8.5Z" fill="none" stroke="#1e1e1e" stroke-width="1.1"/></svg>
    <svg style="left:68px;top:84px" width="14" height="11" viewBox="0 0 14 11"><path d="M3.5 0V7M0 3.5H7M10.5 4V11M7 7.5H14" stroke="#A020C0" stroke-width="1.3"/></svg>
    <div class="t" style="left:89px;top:85px">example.cpp</div>
    <svg style="left:46px;top:106px" width="6" height="9" viewBox="0 0 6 9"><path d="M0.5 0.5L5 4.5L0.5 8.5Z" fill="none" stroke="#1e1e1e" stroke-width="1.1"/></svg>
    <svg style="left:68px;top:104px" width="14" height="11" viewBox="0 0 14 11"><path d="M3.5 0V7M0 3.5H7M10.5 4V11M7 7.5H14" stroke="#A020C0" stroke-width="1.3"/></svg>
    <div class="t" style="left:89px;top:104px">example2.cpp</div>
    <svg style="left:46px;top:125px" width="6" height="9" viewBox="0 0 6 9"><path d="M0.5 0.5L5 4.5L0.5 8.5Z" fill="none" stroke="#1e1e1e" stroke-width="1.1"/></svg>
    <svg style="left:68px;top:123px" width="14" height="11" viewBox="0 0 14 11"><path d="M3.5 0V7M0 3.5H7M10.5 4V11M7 7.5H14" stroke="#A020C0" stroke-width="1.3"/></svg>
    <div class="t" style="left:89px;top:124px">quick_fix.cpp</div>
  </div>
  <div class="a" style="left:885px;top:169px;width:16px;height:157px;background:#E8E8EC"></div>
  <svg style="left:889px;top:176px" width="9" height="6"><path d="M0 5H8L4 0.5Z" fill="#8A8FA2"/></svg>
  <div class="a" style="left:889px;top:237px;width:9px;height:70px;background:#C2C3C9"></div>
  <svg style="left:889px;top:313px" width="9" height="6"><path d="M0 0.5H8L4 5Z" fill="#8A8FA2"/></svg>
  <div class="a" style="left:754px;top:326px;width:147px;height:15px;background:#E8E8EC"></div>
  <svg style="left:760px;top:329px" width="5" height="9"><path d="M4.5 0V8L0.5 4Z" fill="#8A8FA2"/></svg>
  <div class="a" style="left:771px;top:328px;width:57px;height:10px;background:#C2C3C9"></div>
  <svg style="left:873px;top:329px" width="5" height="9"><path d="M0 0V8L4 4Z" fill="#8A8FA2"/></svg>
  <div class="a wh" style="left:754px;top:341px;width:72px;height:22px"></div>
  <div class="t" style="left:759px;top:346px;letter-spacing:-0.3px">Solution E...</div>
  <div class="a" style="left:827px;top:343px;width:74px;height:18px;background:#41529A"></div>
  <div class="t" style="left:834px;top:346px;color:#fff;letter-spacing:-0.3px">Git Chang...</div>

  <!-- CONFIGURATION -->
  <div class="a ttl" style="left:754px;top:372px;width:148px;height:22px;border-bottom:1px solid #34468C"></div>
  <div class="t" style="left:758px;top:377px;color:#fff">Configuration</div>
  <svg style="left:850px;top:382px" width="8" height="5"><path d="M0 0H7L3.5 4Z" fill="#D9DEF2"/></svg>
  <svg style="left:869px;top:377px" width="8" height="13" viewBox="0 0 8 13"><path d="M1.5 0.5H6.5 M2.5 0.5V7.5 M5.5 0.5V7.5 M0 7.5H8 M4 7.5V12.5" fill="none" stroke="#D9DEF2" stroke-width="1.1"/><rect x="4" y="1" width="1.5" height="6" fill="#D9DEF2"/></svg>
  <svg style="left:885px;top:379px" width="10" height="9" viewBox="0 0 10 9"><path d="M0.5 0.5L9.5 8.5M9.5 0.5L0.5 8.5" stroke="#D9DEF2" stroke-width="1.2"/></svg>
  <div class="a tb" style="left:754px;top:394px;width:148px;height:27px;border-top:1px solid #F2F4FB"></div>
  <svg style="left:760px;top:399px" width="16" height="17" viewBox="0 0 16 17">
    <path d="M5 6V1.5H10.5L14.5 5.5V14.5H9" fill="#E6E8F0" stroke="#111" stroke-width="1.1"/><path d="M10.5 1.5V5.5H14.5" fill="none" stroke="#111" stroke-width="1"/><circle cx="3.6" cy="9.6" r="2.1" fill="none" stroke="#111" stroke-width="2"/><path d="M5 11L8.8 14.8" stroke="#111" stroke-width="2.4" stroke-linecap="round"/><path d="M1 7L3.3 9.3" stroke="#CCD5F0" stroke-width="1.4"/>
  </svg>
  <svg style="left:783px;top:399px" width="17" height="17" viewBox="0 0 17 17">
    <rect x="5.5" y="1.5" width="11" height="8" fill="#E6E8F0" stroke="#111" stroke-width="1.1"/><path d="M8 4H14M8 6.5H12" stroke="#9AA0B5" stroke-width="0.9"/><path d="M9 11.5H14" stroke="#111" stroke-width="1.1"/><circle cx="3.6" cy="9.6" r="2.1" fill="none" stroke="#111" stroke-width="2"/><path d="M5 11L8.8 14.8" stroke="#111" stroke-width="2.4" stroke-linecap="round"/><path d="M1 7L3.3 9.3" stroke="#CCD5F0" stroke-width="1.4"/>
  </svg>
  <svg style="left:806px;top:400px" width="17" height="15" viewBox="0 0 17 15">
    <path d="M0.5 1.5Q4 0 7.5 1.5Q11 0 14.5 1.5V7 M7.5 1.5V12 M0.5 1.5V12.5Q4 11 7.5 12.5H9" fill="#F2F3F8" stroke="#1e1e1e"/>
    <circle cx="12.5" cy="10.5" r="4.3" fill="#1F4DB5"/>
    <text x="12.5" y="13.5" font-size="7" font-weight="bold" fill="#fff" text-anchor="middle" font-family="Liberation Sans">?</text>
  </svg>
  <div class="a wh" style="left:754px;top:421px;width:148px;height:154px"></div>
  <div class="t" style="left:782px;top:427px">Build setting:</div>
  <svg style="left:762px;top:443px" width="13" height="13" viewBox="0 0 13 13"><rect x="0.6" y="2.6" width="11.8" height="9.8" fill="#F2F2F2" stroke="#1e1e1e" stroke-width="1.2"/><rect x="4.5" y="0" width="4" height="3" fill="#1e1e1e"/><circle cx="6.5" cy="1.2" r="1.2" fill="#1F4DB5"/></svg>
  <div class="t" style="left:782px;top:443px">Build options file</div>
  <div class="t" style="left:782px;top:460px">not required</div>
  <div class="t" style="left:782px;top:481px;color:#8BA845">Build options</div>
  <svg style="left:762px;top:497px" width="14" height="14" viewBox="0 0 14 14"><circle cx="6.7" cy="6.7" r="6" fill="#D8D8D8" stroke="#333" stroke-width="1.2"/></svg>
  <div class="t" style="left:782px;top:497px;color:#8BA845">generation not</div>
  <div class="t" style="left:782px;top:514px;color:#8BA845">needed</div>
  <div class="a" style="left:836px;top:575px;width:66px;height:1px;background:#3E4E93"></div>
  <div class="a wh" style="left:754px;top:575px;width:82px;height:22px"></div>
  <div class="t" style="left:759px;top:582px">Configuration</div>
  <div class="a" style="left:839px;top:577px;width:52px;height:18px;background:#41529A"></div>
  <div class="t" style="left:844px;top:582px;color:#fff;letter-spacing:-0.3px">Baseline</div>

  <!-- NOTIFICATIONS -->
  <div class="a" style="left:929px;top:91px;width:6px;height:70px;background:#4D5A93"></div>
  <div class="t" style="left:910px;top:93px;color:#E6E9F6;writing-mode:vertical-rl;line-height:13px">Notifications</div>

  <!-- STATUS BAR CONTENT -->
  <svg style="left:5px;top:609px" width="17" height="16" viewBox="0 0 17 16"><path d="M0.8 0.8H15.7V11.5H10.5L8.2 14L6 11.5H0.8Z" fill="none" stroke="#fff" stroke-width="1.3" stroke-linejoin="round"/></svg>
  <div class="t" style="left:30px;top:610px;color:#fff">Ready</div>
  <svg style="left:568px;top:610px" width="12" height="13" viewBox="0 0 12 13"><path d="M6 1V13M1 6L6 1L11 6" fill="none" stroke="#fff" stroke-width="1.3"/></svg>
  <div class="t" style="left:588px;top:610px;color:#fff">Add to Source Control</div>
  <svg style="left:713px;top:615px" width="9" height="5"><path d="M0 4.5H8.5L4.25 0Z" fill="#fff"/></svg>
  <svg style="left:744px;top:610px" width="15" height="14" viewBox="0 0 15 14"><path d="M0.7 0.7H14.3V3.3H0.7Z M2 3.3V13.3H13V3.3" fill="none" stroke="#fff" stroke-width="1.2"/><path d="M5 6V11M10 6V11M5 8.5H10" stroke="#fff" stroke-width="1.2"/></svg>
  <div class="t" style="left:764px;top:610px;color:#fff">Select Repository</div>
  <svg style="left:862px;top:615px" width="9" height="5"><path d="M0 4.5H8.5L4.25 0Z" fill="#fff"/></svg>
  <svg style="left:892px;top:608px" width="14" height="15" viewBox="0 0 14 15"><path d="M2 11V6Q2 1.2 7 1.2Q12 1.2 12 6V11L13.3 12.3H0.7Z" fill="none" stroke="#fff" stroke-width="1.2" stroke-linejoin="round"/><path d="M5.5 13.5Q7 15 8.5 13.5" fill="none" stroke="#fff" stroke-width="1.1"/></svg>
  <svg style="left:921px;top:615px" width="10" height="10" viewBox="0 0 10 10"><g fill="#B8BEDC"><rect x="8" y="0" width="2" height="2"/><rect x="5" y="3" width="2" height="2"/><rect x="8" y="3" width="2" height="2"/><rect x="2" y="6" width="2" height="2"/><rect x="5" y="6" width="2" height="2"/><rect x="8" y="6" width="2" height="2"/></g></svg>
</div></div>
</body></html>
